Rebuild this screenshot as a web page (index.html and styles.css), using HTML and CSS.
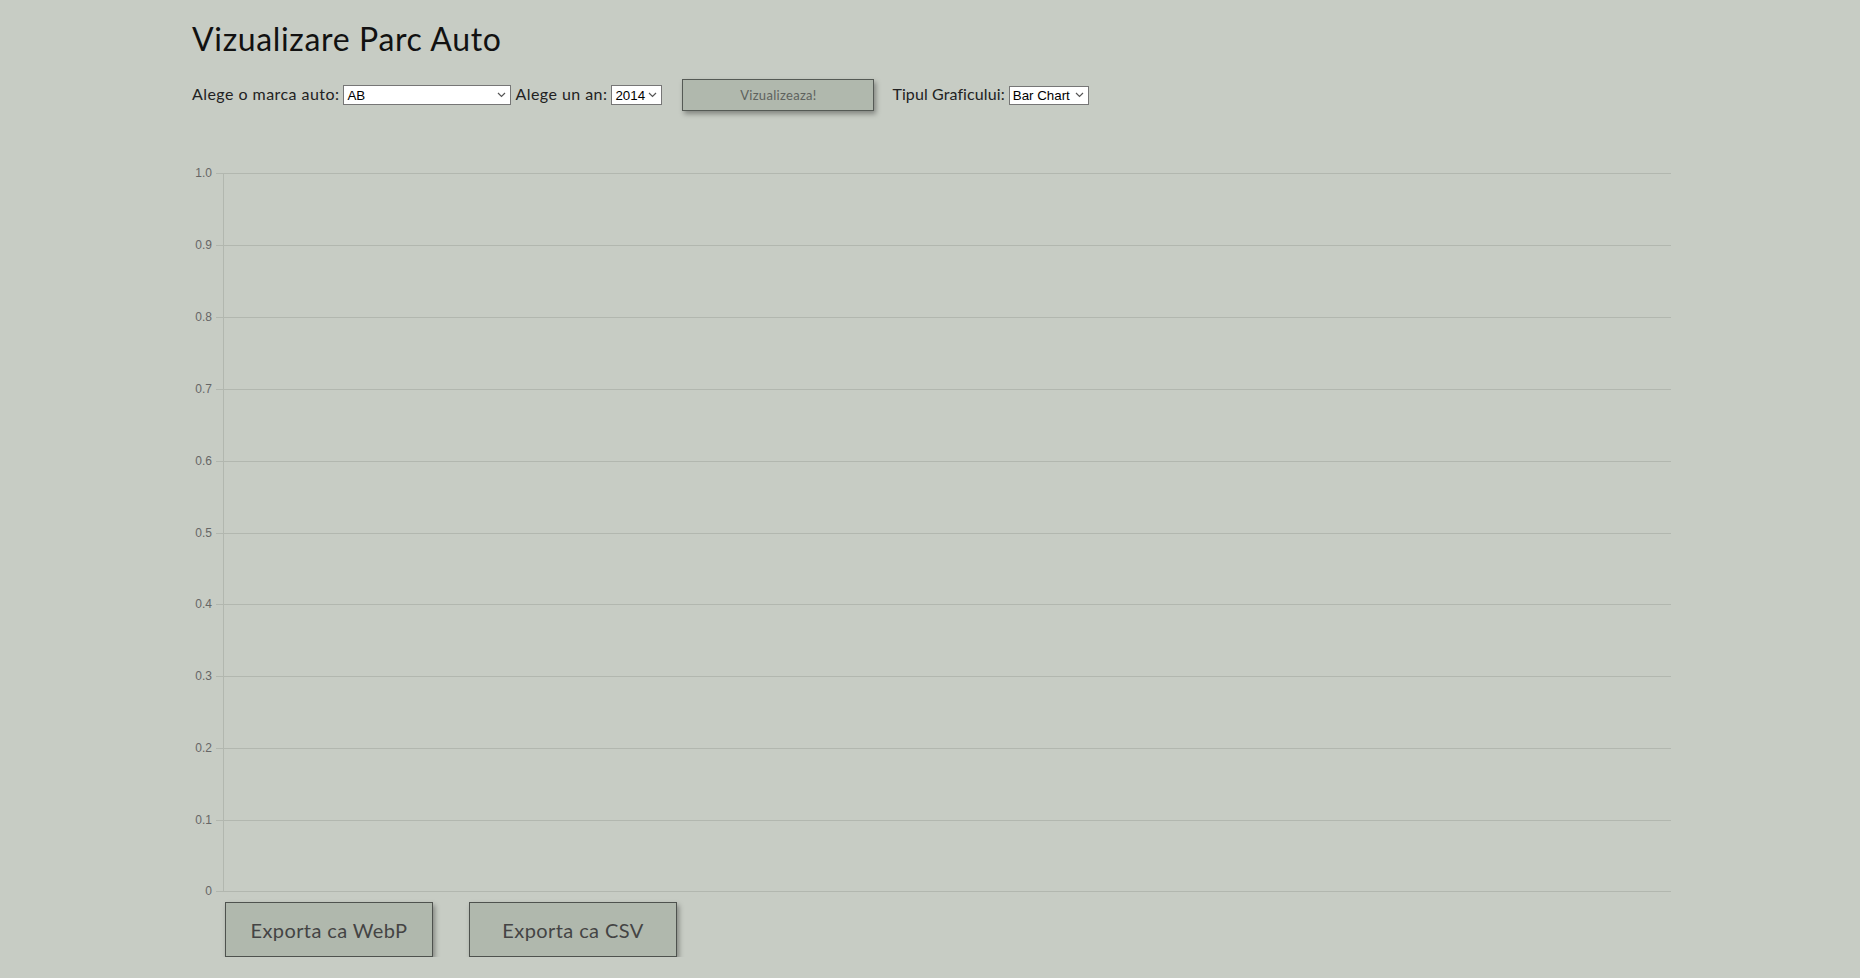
FILE: index.html
```html
<!DOCTYPE html>
<html lang="ro">
<head>
<meta charset="utf-8">
<title>Vizualizare Parc Auto</title>
<link rel="stylesheet" href="styles.css">
</head>
<body>
<div class="page">
  <h1 class="title">Vizualizare Parc Auto</h1>
  <div class="controls">
    <label class="lbl">Alege o marca auto:</label>
    <span class="sel-wrap sel-marca">
      <select class="sel"><option>AB</option></select>
      <svg class="chev" width="9" height="6" viewBox="0 0 9 6"><path d="M1 1 L4.5 4.5 L8 1" fill="none" stroke="#555" stroke-width="1.2"/></svg>
    </span>
    <label class="lbl">Alege un an:</label>
    <span class="sel-wrap sel-an">
      <select class="sel"><option>2014</option></select>
      <svg class="chev" width="9" height="6" viewBox="0 0 9 6"><path d="M1 1 L4.5 4.5 L8 1" fill="none" stroke="#555" stroke-width="1.2"/></svg>
    </span>
    <button class="btn-view">Vizualizeaza!</button>
    <label class="lbl lbl-tip">Tipul Graficului:</label>
    <span class="sel-wrap sel-tip">
      <select class="sel"><option>Bar Chart</option></select>
      <svg class="chev" width="9" height="6" viewBox="0 0 9 6"><path d="M1 1 L4.5 4.5 L8 1" fill="none" stroke="#555" stroke-width="1.2"/></svg>
    </span>
  </div>
  <div class="chart">
    <svg class="chart-svg" width="1490" height="740" viewBox="0 0 1490 740">
      <g class="grid">
        <line x1="24" y1="13.5" x2="1479" y2="13.5"/>
        <line x1="24" y1="85.5" x2="1479" y2="85.5"/>
        <line x1="24" y1="157.5" x2="1479" y2="157.5"/>
        <line x1="24" y1="229.5" x2="1479" y2="229.5"/>
        <line x1="24" y1="301.5" x2="1479" y2="301.5"/>
        <line x1="24" y1="373.5" x2="1479" y2="373.5"/>
        <line x1="24" y1="444.5" x2="1479" y2="444.5"/>
        <line x1="24" y1="516.5" x2="1479" y2="516.5"/>
        <line x1="24" y1="588.5" x2="1479" y2="588.5"/>
        <line x1="24" y1="660.5" x2="1479" y2="660.5"/>
        <line x1="24" y1="731.5" x2="1479" y2="731.5"/>
        <line x1="31.5" y1="13" x2="31.5" y2="732"/>
      </g>
      <g class="ticks">
        <text x="20" y="14">1.0</text>
        <text x="20" y="86">0.9</text>
        <text x="20" y="158">0.8</text>
        <text x="20" y="230">0.7</text>
        <text x="20" y="302">0.6</text>
        <text x="20" y="374">0.5</text>
        <text x="20" y="445">0.4</text>
        <text x="20" y="517">0.3</text>
        <text x="20" y="589">0.2</text>
        <text x="20" y="661">0.1</text>
        <text x="20" y="732">0</text>
      </g>
    </svg>
  </div>
  <div class="exports">
    <button class="btn-export">Exporta ca WebP</button>
    <button class="btn-export">Exporta ca CSV</button>
  </div>
</div>
</body>
</html>
```
FILE: styles.css
```css
html, body {
  margin: 0;
  padding: 0;
  background: #c7ccc4;
}
body {
  font-family: Lato, "Open Sans", sans-serif;
  color: #111;
}
.page {
  padding-left: 192px;
  padding-top: 17px;
}
.title {
  margin: 0;
  font-size: 32px;
  font-weight: 400;
  line-height: 44px;
  letter-spacing: 0.65px;
  color: #111;
}
.controls {
  display: flex;
  align-items: center;
  margin-top: 18px;
  height: 32px;
}
.lbl {
  font-size: 16px;
  letter-spacing: 0.45px;
  color: #222;
  margin-right: 4px;
  padding-bottom: 3px;
}
.lbl-tip {
  letter-spacing: 0.1px;
}
.sel-wrap {
  position: relative;
  display: inline-block;
  margin-right: 4px;
}
.sel {
  display: block;
  appearance: none;
  -webkit-appearance: none;
  font-family: "Liberation Sans", Arial, sans-serif;
  font-size: 13.33px;
  height: 20px;
  width: 100%;
  padding: 0 0 0 3px;
  border: 1px solid #767676;
  border-radius: 0;
  background: #fff;
  color: #000;
  box-sizing: border-box;
}
.chev {
  position: absolute;
  right: 5px;
  top: 7px;
  pointer-events: none;
}
.sel-marca { width: 168px; }
.sel-an { width: 51px; margin-right: 20px; }
.sel-tip { width: 80px; }
.sel-tip .sel { height: 19px; }
.sel-tip .chev { top: 6px; }
.btn-view {
  width: 192px;
  height: 32px;
  background: #b0b8ad;
  border: 1px solid #555a55;
  box-shadow: 2px 3px 5px rgba(0,0,0,0.35);
  font-family: Lato, "Open Sans", sans-serif;
  font-size: 13px;
  letter-spacing: 0.3px;
  color: #5e625d;
  margin-right: 18px;
  padding: 0;
}
.chart {
  margin-top: 49px;
  height: 740px;
}
.chart-svg { display: block; }
.grid line {
  stroke: #b2b7af;
  stroke-width: 1;
}
.ticks text {
  font-family: "Liberation Sans", Arial, sans-serif;
  font-size: 12px;
  fill: #666;
  text-anchor: end;
  dominant-baseline: middle;
}
.exports {
  display: flex;
  gap: 36px;
  margin-left: 33px;
  margin-top: 2px;
}
.btn-export {
  width: 208px;
  height: 55px;
  background: #b0b8ad;
  border: 1px solid #4e524e;
  box-shadow: 2px 3px 5px rgba(0,0,0,0.35);
  font-family: Lato, "Open Sans", sans-serif;
  font-size: 20px;
  letter-spacing: 0.4px;
  color: #444;
  padding: 0;
}
```
